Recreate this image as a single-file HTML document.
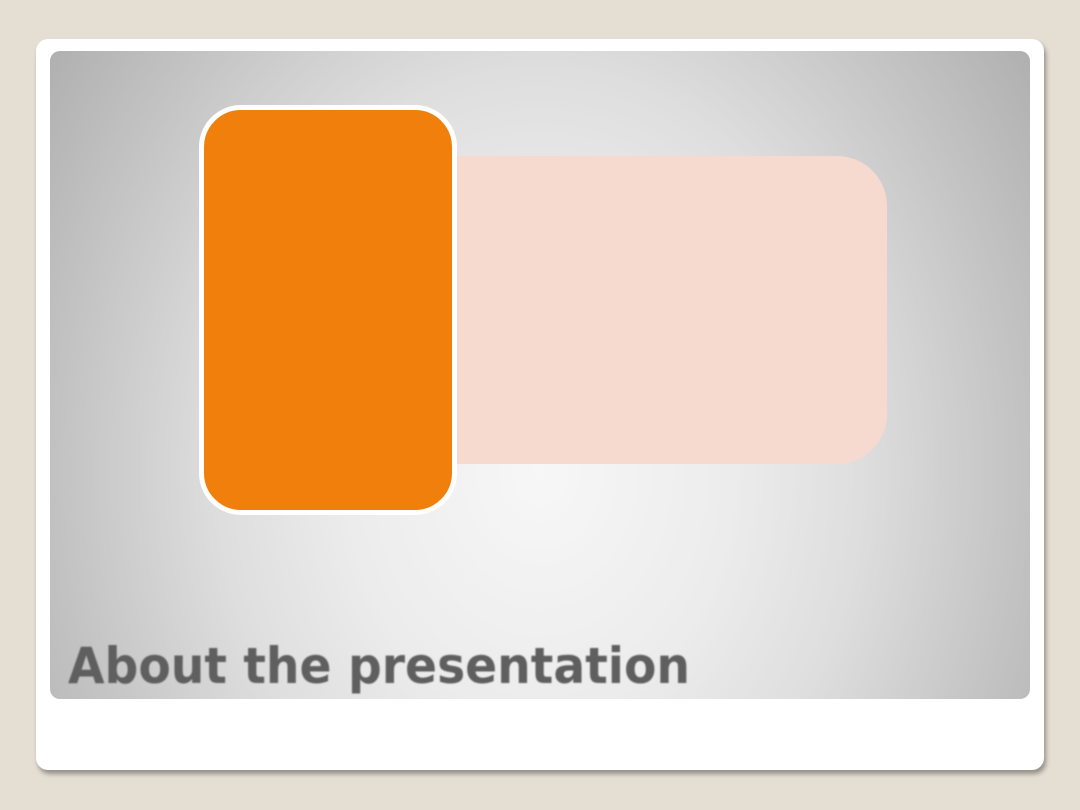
<!DOCTYPE html>
<html><head><style>
html,body{margin:0;padding:0;width:1080px;height:810px;background:#e4ded3;overflow:hidden}
.card{position:absolute;left:36px;top:39px;width:1008px;height:731px;background:#fff;border-radius:12px;box-shadow:2px 4px 5px rgba(0,0,0,.35)}
.panel{position:absolute;left:50px;top:51px;width:980px;height:648px;border-radius:10px;
background:radial-gradient(ellipse 640px 800px at 490px 420px,#f7f7f7 0%,#ececec 30%,#dedede 50%,#c6c6c6 72%,#a8a8a8 100%)}
.pink{position:absolute;left:455px;top:156px;width:432px;height:308px;background:#f6d9cf;border-radius:0 50px 50px 0}
.orange{position:absolute;left:199px;top:105px;width:248px;height:400px;background:#f0800b;border:5px solid #fff;border-radius:42px}
svg{position:absolute;left:0;top:0}
</style></head><body>
<div class="card"></div>
<div class="panel"></div>
<div class="pink"></div>
<div class="orange"></div>
<svg width="1080" height="810"><defs><filter id="b"><feGaussianBlur stdDeviation="0.8"/></filter></defs>
<text x="68" y="683" font-family="DejaVu Sans, Liberation Sans, sans-serif" font-weight="bold" font-size="50" fill="#5e5e5e" textLength="622" lengthAdjust="spacingAndGlyphs" filter="url(#b)">About the presentation</text>
</svg>
</body></html>
